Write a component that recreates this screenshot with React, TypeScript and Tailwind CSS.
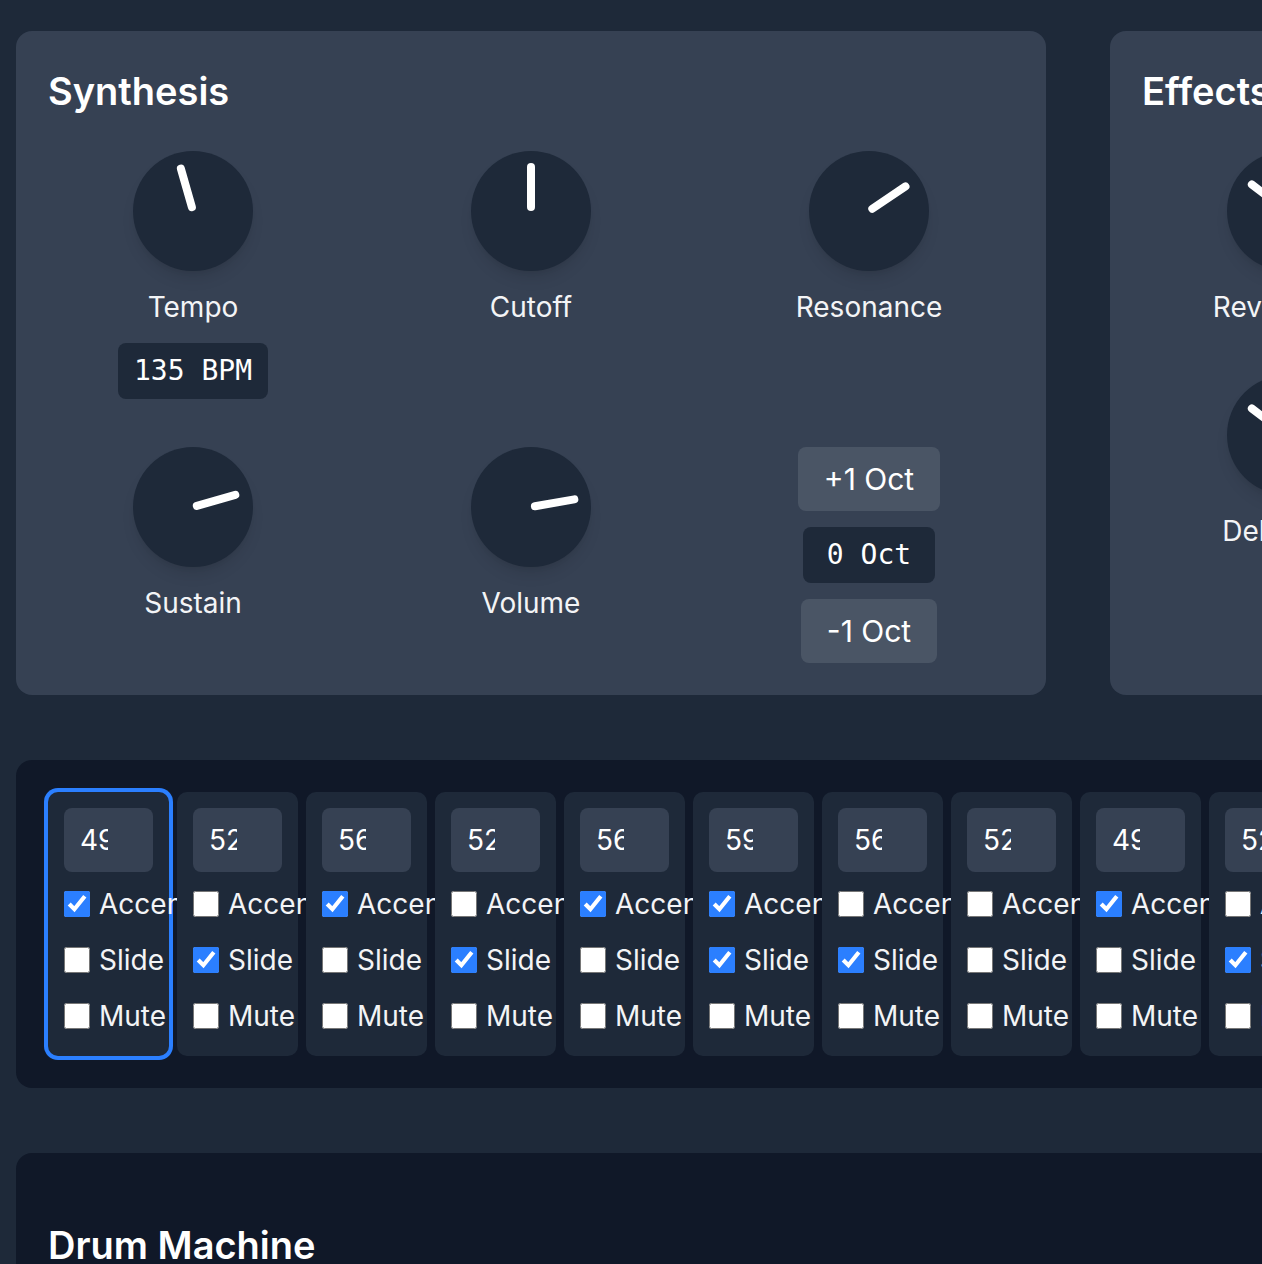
import type { ReactNode } from 'react';

type Step = { note: number; accent: boolean; slide: boolean; mute: boolean };

const steps: Step[] = [
  { note: 49, accent: true, slide: false, mute: false },
  { note: 52, accent: false, slide: true, mute: false },
  { note: 56, accent: true, slide: false, mute: false },
  { note: 52, accent: false, slide: true, mute: false },
  { note: 56, accent: true, slide: false, mute: false },
  { note: 59, accent: true, slide: true, mute: false },
  { note: 56, accent: false, slide: true, mute: false },
  { note: 52, accent: false, slide: false, mute: false },
  { note: 49, accent: true, slide: false, mute: false },
  { note: 52, accent: false, slide: true, mute: false },
  { note: 56, accent: true, slide: false, mute: false },
  { note: 52, accent: false, slide: false, mute: false },
  { note: 49, accent: true, slide: true, mute: false },
  { note: 52, accent: false, slide: false, mute: false },
  { note: 56, accent: true, slide: false, mute: false },
  { note: 59, accent: false, slide: true, mute: false },
];

const drums = ['Kick', 'Snare', 'Closed Hat', 'Open Hat'];

function Knob({ label, angle, children }: { label: string; angle: number; children?: ReactNode }) {
  return (
    <div className="flex flex-col items-center">
      <div className="relative h-[120px] w-[120px] rounded-full bg-gray-800 shadow-lg">
        {/* pointer */}
        <div
          className="absolute bottom-[60px] left-[56px] h-12 w-2 origin-bottom rounded-full bg-white"
          style={{ transform: `rotate(${angle}deg)` }}
        />
      </div>
      <span className="mt-4 whitespace-nowrap text-[28px] leading-10 text-gray-100">{label}</span>
      {children}
    </div>
  );
}

function Check({ label, checked }: { label: string; checked: boolean }) {
  return (
    <label className="flex h-10 items-center gap-[9px] whitespace-nowrap text-[28px] leading-10 text-gray-100">
      <input type="checkbox" defaultChecked={checked} className="m-0 h-[26px] w-[26px] shrink-0 accent-blue-500" />
      <span>{label}</span>
    </label>
  );
}

function StepCell({ step, active }: { step: Step; active: boolean }) {
  return (
    <div
      className={`flex w-[121px] shrink-0 flex-col rounded-[10px] bg-gray-800 px-4 pt-4 pb-5 ${
        active ? 'ring-4 ring-blue-500' : ''
      }`}
    >
      <input
        type="text"
        readOnly
        value={step.note}
        className="h-16 w-full rounded-lg bg-gray-700 pl-4 pr-[45px] text-[28px] text-white outline-none"
      />
      <div className="mt-3 flex flex-col gap-4">
        <Check label="Accent" checked={step.accent} />
        <Check label="Slide" checked={step.slide} />
        <Check label="Mute" checked={step.mute} />
      </div>
    </div>
  );
}

export default function App() {
  return (
    <div className="min-h-screen w-max bg-gray-800 px-4 pt-[31px] pb-16 font-[Inter,sans-serif] text-white">
      {/* Top panels */}
      <div className="flex items-stretch gap-16">
        <div className="w-[1030px] rounded-2xl bg-gray-700 p-8">
          <h2 className="mb-8 text-[38px] leading-[56px] font-semibold text-white">Synthesis</h2>
          <div className="grid grid-cols-3 items-start gap-12">
            <Knob label="Tempo" angle={-16}>
              <div className="mt-4 rounded-lg bg-gray-800 px-4 py-2 font-['DejaVu_Sans_Mono',monospace] text-[28px] leading-10 text-white">
                135 BPM
              </div>
            </Knob>
            <Knob label="Cutoff" angle={0} />
            <Knob label="Resonance" angle={56} />
            <Knob label="Sustain" angle={74} />
            <Knob label="Volume" angle={80} />
            <div className="flex flex-col items-center gap-4">
              <button className="rounded-lg bg-gray-600 px-[26px] py-3 text-[30px] leading-10 text-white">+1 Oct</button>
              <div className="rounded-lg bg-gray-800 px-6 py-2 font-['DejaVu_Sans_Mono',monospace] text-[28px] leading-10 text-white">
                0 Oct
              </div>
              <button className="rounded-lg bg-gray-600 px-[26px] py-3 text-[30px] leading-10 text-white">-1 Oct</button>
            </div>
          </div>
        </div>

        <div className="w-[354px] rounded-2xl bg-gray-700 p-8">
          <h2 className="mb-8 text-[38px] leading-[56px] font-semibold text-white">Effects</h2>
          <div className="flex flex-col gap-12">
            <Knob label="Reverb Mix" angle={-53} />
            <Knob label="Delay Mix" angle={-53} />
          </div>
        </div>
      </div>

      {/* Sequencer */}
      <section className="mt-[65px] rounded-2xl bg-gray-900 p-8">
        <div className="flex gap-2">
          {steps.map((s, i) => (
            <StepCell key={i} step={s} active={i === 0} />
          ))}
        </div>
      </section>

      {/* Drum machine */}
      <section className="mt-[65px] rounded-2xl bg-gray-900 px-8 pt-16 pb-8">
        <h2 className="mb-8 text-[38px] leading-[56px] font-semibold text-white">Drum Machine</h2>
        <div className="flex flex-col gap-4">
          {drums.map((d) => (
            <div key={d} className="flex items-center gap-4">
              <span className="w-[200px] text-[28px] text-gray-100">{d}</span>
              {steps.map((_, i) => (
                <div key={i} className="h-16 w-16 rounded-lg bg-gray-700" />
              ))}
            </div>
          ))}
        </div>
      </section>
    </div>
  );
}
